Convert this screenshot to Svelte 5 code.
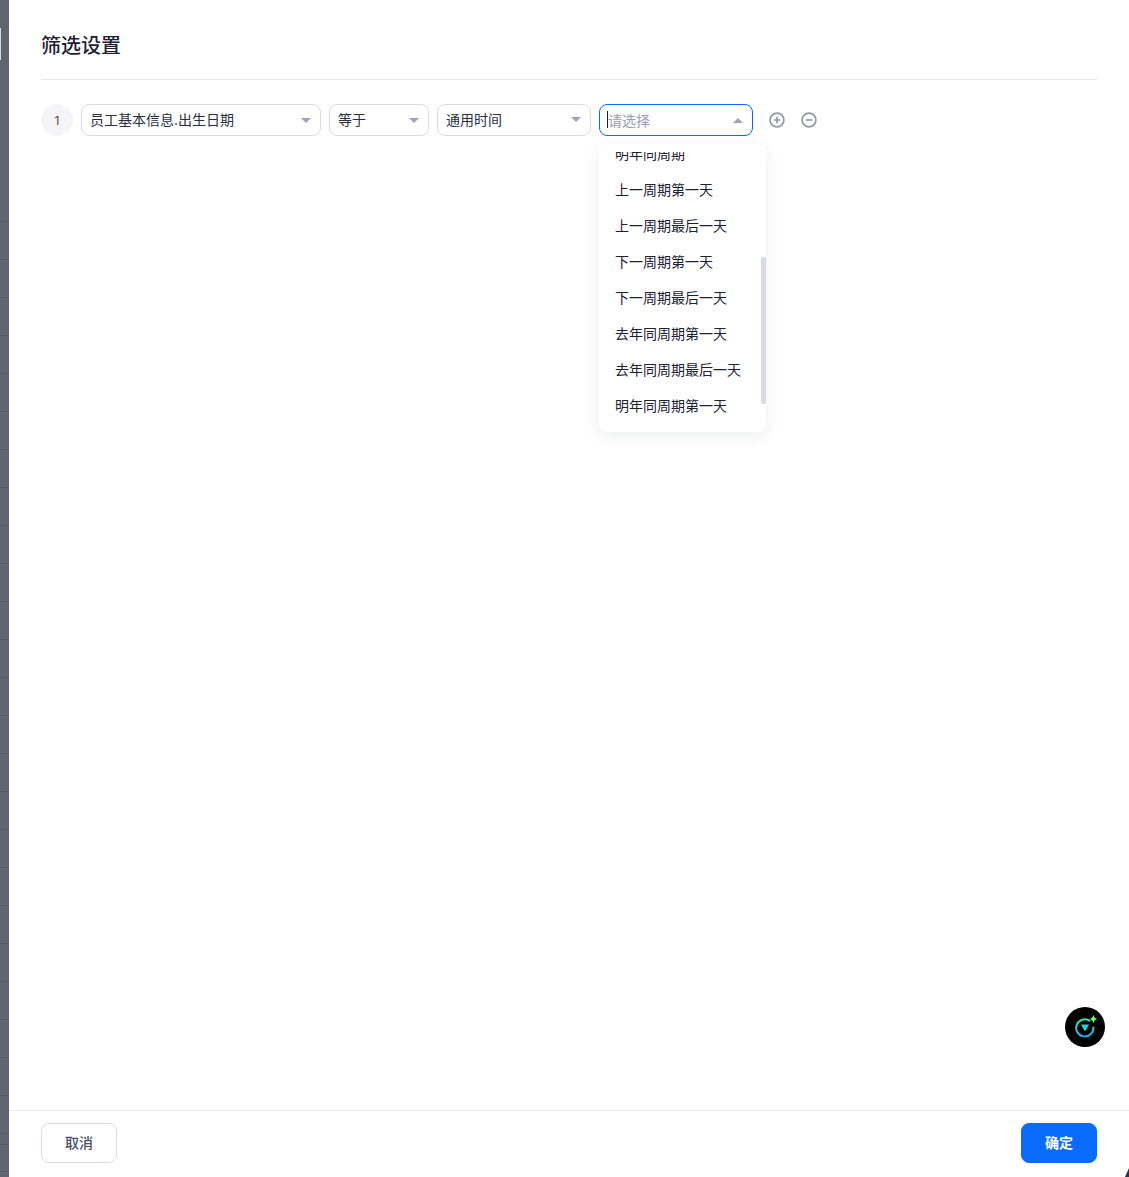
<script lang="ts">
  const options = [
    '明年同周期',
    '上一周期第一天',
    '上一周期最后一天',
    '下一周期第一天',
    '下一周期最后一天',
    '去年同周期第一天',
    '去年同周期最后一天',
    '明年同周期第一天'
  ]
</script>

<div class="page">
  <div class="backdrop"><span class="backdrop-tab"></span></div>
  <div class="drawer">
    <div class="drawer-main">
      <h2 class="title">筛选设置</h2>
      <div class="rule">
        <span class="rule-index">1</span>
        <div class="select field-wide">
          <span>员工基本信息.出生日期</span>
          <i class="caret"></i>
        </div>
        <div class="select field-op">
          <span>等于</span>
          <i class="caret"></i>
        </div>
        <div class="select field-mid">
          <span>通用时间</span>
          <i class="caret caret-high"></i>
        </div>
        <div class="value-wrap">
          <div class="select field-mid is-open">
            <span class="placeholder"><i class="text-cursor"></i>请选择</span>
            <i class="caret caret-up"></i>
          </div>
          <div class="dropdown">
            <div class="dropdown-view">
              <div class="dropdown-list">
                {#each options as option}
                  <div class="option">{option}</div>
                {/each}
              </div>
            </div>
            <span class="scroll-thumb"></span>
          </div>
        </div>
        <div class="rule-actions">
          <svg width="16" height="16" viewBox="0 0 16 16" fill="none" stroke="#9496ad" stroke-width="1.7">
            <circle cx="8" cy="8" r="6.9" />
            <path d="M4.8 8h6.4M8 4.8v6.4" />
          </svg>
          <svg width="16" height="16" viewBox="0 0 16 16" fill="none" stroke="#9496ad" stroke-width="1.7">
            <circle cx="8" cy="8" r="6.9" />
            <path d="M4.8 8h6.4" />
          </svg>
        </div>
      </div>
    </div>
    <div class="drawer-footer">
      <button class="btn">取消</button>
      <button class="btn btn-primary">确定</button>
    </div>
    <div class="assistant">
      <svg width="24" height="24" viewBox="0 0 24 24" fill="none">
        <defs>
          <linearGradient id="ring" x1="0.5" y1="0" x2="0.5" y2="1">
            <stop offset="0" stop-color="#2fe6b0" />
            <stop offset="1" stop-color="#1ab4ee" />
          </linearGradient>
        </defs>
        <path d="M16.4 5.6A8.6 8.6 0 1 0 20.4 12.4" stroke="url(#ring)" stroke-width="2" stroke-linecap="round" />
        <path d="M8 9.6h8l-3.2 5.8h-1.6z" fill="#22d0d8" />
        <path d="M20.4 0l1.3 2.8 2.3 1.2-2.3 1.2-1.3 2.8-1.3-2.8-2.3-1.2 2.3-1.2z" fill="#7ff566" />
      </svg>
    </div>
  </div>
</div>

<style>
  :global(body) {
    background: #fff;
  }
  .page {
    display: flex;
    height: 1177px;
    font-family: Inter, "Noto Sans CJK SC", sans-serif;
    color: #1c2033;
    overflow: hidden;
    position: relative;
  }
  .page::after {
    content: '';
    position: absolute;
    right: 0;
    bottom: 0;
    width: 4px;
    height: 9px;
    background: #2a3346;
    clip-path: polygon(100% 0, 100% 100%, 0 100%);
  }
  .backdrop {
    width: 9px;
    flex-shrink: 0;
    position: relative;
    background:
      linear-gradient(#62646f, #62646f) 0 0 / 100% 184px no-repeat,
      linear-gradient(#575965, #575965) 0 1144px / 100% 1px no-repeat,
      repeating-linear-gradient(to bottom, #62646f 0, #62646f 37px, #575965 37px, #575965 38px) 0 -6px / 100% 1216px no-repeat;
  }
  .backdrop-tab {
    position: absolute;
    left: 0;
    top: 28px;
    width: 1px;
    height: 32px;
    background: #d8d9de;
  }
  .drawer {
    flex: 1;
    display: flex;
    flex-direction: column;
    position: relative;
    background: #fff;
  }
  .drawer-main {
    flex: 1;
    padding: 0 32px;
  }
  .title {
    margin: 0;
    padding: 32px 0 19px;
    border-bottom: 1px solid #e6e6ef;
    font-size: 20px;
    line-height: 28px;
    font-weight: 500;
    color: #1c2033;
  }
  .rule {
    display: flex;
    align-items: center;
    gap: 8px;
    margin-top: 24px;
    height: 32px;
  }
  .rule-index {
    width: 32px;
    height: 32px;
    border-radius: 50%;
    background: #f4f4f9;
    display: flex;
    align-items: center;
    justify-content: center;
    font-size: 12px;
    color: #474a5e;
  }
  .select {
    box-sizing: border-box;
    height: 32px;
    padding: 0 8px;
    border: 1px solid #dcdce8;
    border-radius: 8px;
    display: flex;
    align-items: center;
    justify-content: space-between;
    font-size: 14px;
    line-height: 20px;
    color: #2b2e42;
    background: #fff;
  }
  .field-wide { width: 240px; }
  .field-op { width: 100px; }
  .field-mid { width: 154px; }
  .is-open { border-color: #0a6cff; }
  .placeholder {
    color: #9a9cb4;
    position: relative;
    padding-top: 1px;
  }
  .text-cursor {
    position: absolute;
    left: -1px;
    top: 1px;
    width: 1px;
    height: 17px;
    background: #1c2033;
  }
  .caret {
    width: 0;
    height: 0;
    margin-right: 1px;
    border-left: 5px solid transparent;
    border-right: 5px solid transparent;
    border-top: 5px solid #a0a2b8;
  }
  .caret-high { margin-top: -2px; }
  .caret-up {
    border-top: 0;
    border-bottom: 5px solid #a0a2b8;
  }
  .value-wrap {
    position: relative;
  }
  .dropdown {
    position: absolute;
    left: 0;
    top: 40px;
    width: 167px;
    height: 288px;
    box-sizing: border-box;
    padding: 8px 0;
    border-radius: 8px;
    background: #fff;
    box-shadow: 0 4px 16px rgba(28, 32, 51, 0.08);
    z-index: 2;
  }
  .dropdown-view {
    height: 272px;
    overflow: hidden;
  }
  .dropdown-list {
    margin-top: -16px;
  }
  .option {
    height: 36px;
    line-height: 36px;
    padding-left: 16px;
    font-size: 14px;
    color: #1c2033;
    white-space: nowrap;
  }
  .scroll-thumb {
    position: absolute;
    right: 0;
    top: 113px;
    width: 5px;
    height: 147px;
    border-radius: 2px;
    background: #d9dae5;
  }
  .rule-actions {
    display: flex;
    gap: 16px;
    margin-left: 8px;
  }
  .drawer-footer {
    box-sizing: border-box;
    height: 67px;
    border-top: 1px solid #eaeaf2;
    padding: 12px 32px 0;
    display: flex;
    justify-content: space-between;
    align-items: flex-start;
  }
  .btn {
    width: 76px;
    height: 40px;
    padding: 0 0 2px;
    border: 1px solid #dcdce8;
    border-radius: 8px;
    background: #fff;
    font-family: inherit;
    font-size: 14px;
    font-weight: 500;
    color: #4a4d68;
  }
  .btn-primary {
    background: #0a6cff;
    border-color: #0a6cff;
    color: #fff;
    font-weight: 600;
  }
  .assistant {
    position: absolute;
    right: 24px;
    top: 1007px;
    width: 40px;
    height: 40px;
    border-radius: 50%;
    background: #000;
    display: flex;
    align-items: center;
    justify-content: center;
  }
</style>
